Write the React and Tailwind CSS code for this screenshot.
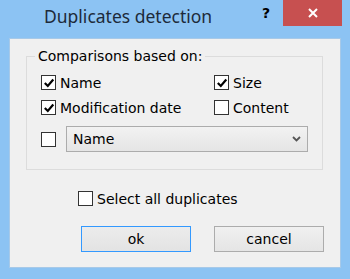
const ui = { fontFamily: '"DejaVu Sans", Verdana, sans-serif' };

function Check({ checked }) {
  return (
    <span className="flex h-[15px] w-[15px] shrink-0 items-center justify-center border border-[#333333] bg-white">
      {checked && (
        <svg width="12" height="12" viewBox="0 0 12 12">
          <path d="M1.8 6 L4.8 9 L10.3 2.5" fill="none" stroke="#000" strokeWidth="2.2" />
        </svg>
      )}
    </span>
  );
}

function Option({ checked, label, className = '' }) {
  return (
    <div className={`flex items-center gap-[4px] ${className}`}>
      <Check checked={checked} />
      <span className="text-[14px] leading-none text-black">{label}</span>
    </div>
  );
}

export default function App() {
  return (
    <div className="flex h-[279px] w-[350px] flex-col bg-[#8cc3f3]" style={ui}>
      <div className="relative flex h-[38px] shrink-0 items-start">
        <span
          className="ml-[44px] mt-[8px] text-[17.5px] leading-none text-[#1d2a3a]"
          style={{ fontFamily: '"Noto Sans", "Open Sans", sans-serif' }}
        >
          Duplicates detection
        </span>
        <span className="absolute left-[262px] top-[6px] text-[14px] font-bold leading-none text-black">?</span>
        <div className="absolute left-[283px] top-0 flex h-[26px] w-[59px] items-center justify-center bg-[#c75050]">
          <svg width="10" height="10" viewBox="0 0 10 10">
            <path d="M1 1 L9 9 M9 1 L1 9" stroke="#fff" strokeWidth="2" />
          </svg>
        </div>
      </div>
      <div className="mx-[9px] mb-[11px] flex flex-1 flex-col border border-[#a7c9e8] bg-[#f0f0f0]">
        <div className="relative ml-[16px] mt-[17px] h-[114px] w-[297px] border border-[#dcdcdc] pl-[14px] pt-[18px]">
          <span className="absolute -top-[8px] left-[8px] bg-[#f0f0f0] px-[3px] text-[14px] leading-none text-black">
            Comparisons based on:
          </span>
          <div className="flex">
            <Option checked label="Name" className="w-[173px]" />
            <Option checked label="Size" />
          </div>
          <div className="mt-[10px] flex">
            <Option checked label="Modification date" className="w-[173px]" />
            <Option label="Content" />
          </div>
          <div className="mt-[11px] flex items-center">
            <Check />
            <div className="ml-[10px] flex h-[26px] w-[242px] items-center justify-between border border-[#acacac] bg-gradient-to-b from-[#f2f2f2] to-[#e5e5e5] pl-[6px] pr-[6px]">
              <span className="text-[14px] leading-none text-black">Name</span>
              <svg width="9" height="6" viewBox="0 0 9 6">
                <path d="M1 1 L4.5 4.5 L8 1" fill="none" stroke="#555" strokeWidth="1.8" />
              </svg>
            </div>
          </div>
        </div>
        <Option label="Select all duplicates" className="ml-[68px] mt-[21px]" />
        <div className="ml-[71px] mt-[20px] flex gap-[23px]">
          <div className="flex h-[26px] w-[110px] items-center justify-center border border-[#3399ff] bg-gradient-to-b from-[#ececec] to-[#e3e3e3] text-[14px] text-black">
            ok
          </div>
          <div className="flex h-[26px] w-[110px] items-center justify-center border border-[#acacac] bg-gradient-to-b from-[#f0f0f0] to-[#e5e5e5] text-[14px] text-black">
            cancel
          </div>
        </div>
      </div>
    </div>
  );
}
